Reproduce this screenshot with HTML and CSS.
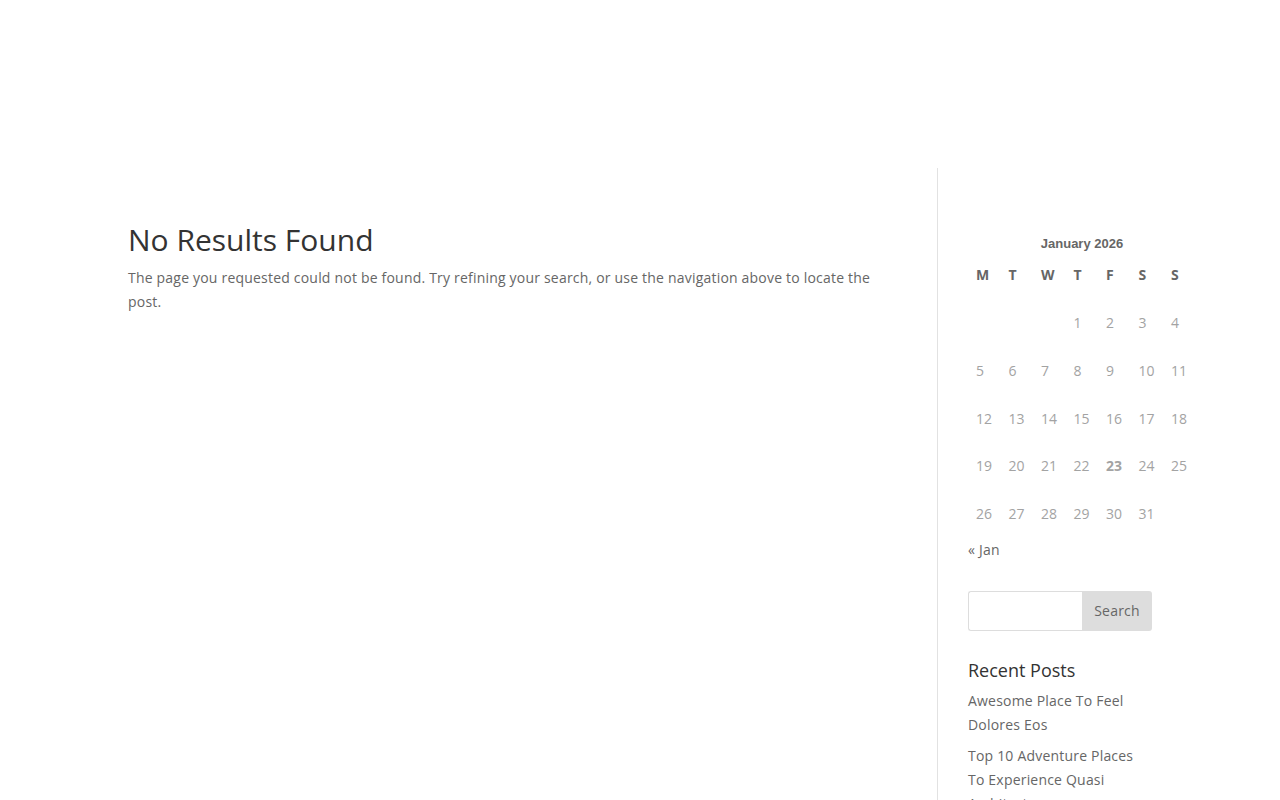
FILE: index.html
```html
<!DOCTYPE html>
<html lang="en">
<head>
<meta charset="utf-8">
<title>No Results Found</title>
<link rel="stylesheet" href="styles.css">
</head>
<body>
<header class="site-header"></header>
<main class="main-content">
  <div class="container">
    <div class="left-area">
      <h1 class="not-found-title">No Results Found</h1>
      <p class="not-found-text">The page you requested could not be found. Try refining your search, or use the navigation above to locate the post.</p>
    </div>
    <aside class="sidebar">
      <div class="widget calendar-widget">
        <div class="cal-caption">January 2026</div>
        <div class="cal-grid cal-head">
          <span>M</span><span>T</span><span>W</span><span>T</span><span>F</span><span>S</span><span>S</span>
        </div>
        <div class="cal-grid cal-body">
          <span></span><span></span><span></span><span>1</span><span>2</span><span>3</span><span>4</span>
          <span>5</span><span>6</span><span>7</span><span>8</span><span>9</span><span>10</span><span>11</span>
          <span>12</span><span>13</span><span>14</span><span>15</span><span>16</span><span>17</span><span>18</span>
          <span>19</span><span>20</span><span>21</span><span>22</span><span class="today">23</span><span>24</span><span>25</span>
          <span>26</span><span>27</span><span>28</span><span>29</span><span>30</span><span>31</span><span></span>
        </div>
        <div class="cal-nav"><a href="#">« Jan</a></div>
      </div>
      <div class="widget search-widget">
        <form class="search-form">
          <input class="search-input" type="text" aria-label="Search">
          <button class="search-btn" type="button">Search</button>
        </form>
      </div>
      <div class="widget recent-widget">
        <h4 class="widget-title">Recent Posts</h4>
        <ul class="recent-list">
          <li><a href="#">Awesome Place To Feel Dolores Eos</a></li>
          <li><a href="#">Top 10 Adventure Places To Experience Quasi Architecto</a></li>
          <li><a href="#">Enjoy Ullam Ex The Most Beautiful Places</a></li>
        </ul>
      </div>
    </aside>
  </div>
</main>
</body>
</html>
```

FILE: styles.css
```css
* { box-sizing: border-box; }
html, body { margin: 0; padding: 0; background: #fff; }
body {
  font-family: "Open Sans", Arial, sans-serif;
  font-size: 14px;
  line-height: 24px;
  letter-spacing: 0.2px;
  color: #666;
}
a { color: #666; text-decoration: none; }

.site-header { height: 168px; background: #fff; }

.container {
  width: 1024px;
  margin: 0 auto;
  display: flex;
  align-items: stretch;
  min-height: 632px;
}

.left-area {
  width: 809px;
  padding: 57px 56px 0 0;
}
.not-found-title {
  margin: 0;
  padding-bottom: 11px;
  font-size: 30px;
  line-height: 30px;
  font-weight: 500;
  letter-spacing: 0;
  color: #333;
}
.not-found-text { margin: 0; }

.sidebar {
  width: 215px;
  border-left: 1px solid #e2e2e2;
  padding: 59px 0 0 30px;
}
.widget { margin-bottom: 30px; }

.calendar-widget { width: 228px; margin-bottom: 29px; }
.cal-caption {
  font-family: "Liberation Sans", Arial, sans-serif;
  font-weight: bold;
  font-size: 13px;
  line-height: 34px;
  letter-spacing: 0;
  text-align: center;
  color: #666;
}
.cal-grid {
  display: grid;
  grid-template-columns: repeat(7, 32.5px);
  letter-spacing: 0;
}
.cal-grid span { padding-left: 8px; }
.cal-head { height: 38px; }
.cal-head span {
  font-weight: bold;
  line-height: 28px;
  color: #666;
}
.cal-body span {
  line-height: 47.75px;
  color: #a3a3a3;
}
.cal-body .today { font-weight: bold; }
.cal-nav { line-height: 24px; }

.search-form { display: flex; width: 184px; height: 40px; margin: 0; }
.search-input {
  flex: 1;
  min-width: 0;
  height: 40px;
  border: 1px solid #ddd;
  border-right: none;
  border-radius: 3px 0 0 3px;
  background: #fff;
  margin: 0;
}
.search-btn {
  width: 70px;
  height: 40px;
  border: none;
  border-radius: 0 3px 3px 0;
  background: #ddd;
  color: #666;
  font-family: "Open Sans", Arial, sans-serif;
  font-size: 14px;
  letter-spacing: 0.2px;
  margin: 0;
  padding: 0;
}

.widget-title {
  margin: 0;
  padding-bottom: 10px;
  font-size: 18px;
  line-height: 18px;
  font-weight: 500;
  letter-spacing: 0;
  color: #333;
}
.recent-list { list-style: none; margin: 0; padding: 0; width: 170px; }
.recent-list li { margin-bottom: 7px; }
```
